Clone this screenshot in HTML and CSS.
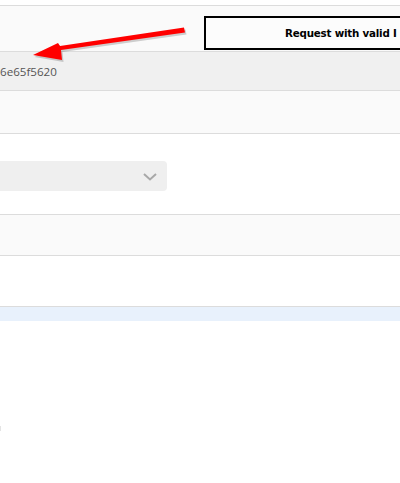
FILE: index.html
```html
<!DOCTYPE html>
<html>
<head>
<meta charset="utf-8">
<link rel="stylesheet" href="styles.css">
</head>
<body>
<div class="page">
  <div class="gap-top"></div>
  <div class="row row-light h45"></div>
  <div class="row row-gray h38"><span class="hash">6e65f5620</span></div>
  <div class="row row-light h42"></div>
  <div class="row row-white h80">
    <div class="select"><svg class="chev" width="14" height="8" viewBox="0 0 14 8"><path d="M1 1 L7 6.5 L13 1" fill="none" stroke="#a8a8a8" stroke-width="2"/></svg></div>
  </div>
  <div class="row row-light h40"></div>
  <div class="row row-white h50"></div>
  <div class="row-blue"></div>
  <div class="rest"><span class="mark"></span></div>

  <div class="callout"><span>Request with valid I</span></div>
  <svg class="arrow" width="200" height="80" viewBox="0 0 200 80">
    <g transform="translate(1.5,2)" fill="#000" opacity="0.18">
      <path d="M184 27.5 L185 32.5 L61 50 L62 60 L33 55 L58 43 L60 46 Z"/>
    </g>
    <path d="M184 27.5 L185 32.5 L61 50 L62 60 L33 55 L58 43 L60 46 Z" fill="#f00"/>
  </svg>
</div>
</body>
</html>
```
FILE: styles.css
```css
html, body {
  margin: 0;
  padding: 0;
  background: #fff;
}
.page {
  position: relative;
  width: 400px;
  height: 483px;
  overflow: hidden;
  font-family: "Open Sans", "Liberation Sans", sans-serif;
}
.gap-top {
  height: 5px;
  border-bottom: 1px solid #dcdcdc;
}
.row {
  border-bottom: 1px solid #dcdcdc;
  display: flex;
  align-items: center;
}
.row-light { background: #fafafa; }
.row-gray { background: #f0f0f0; }
.row-white { background: #fff; }
.h45 { height: 45px; }
.h38 { height: 38px; }
.h42 { height: 42px; }
.h80 { height: 80px; }
.h40 { height: 40px; }
.h50 { height: 50px; }
.hash {
  font-size: 11.6px;
  color: #555;
  line-height: 1;
  padding-top: 1px;
}
.select {
  width: 167px;
  height: 30px;
  margin-top: 4px;
  background: #efefef;
  border-radius: 0 4px 4px 0;
  display: flex;
  align-items: center;
  justify-content: flex-end;
}
.chev {
  margin-right: 10px;
  margin-top: 1px;
}
.row-blue {
  height: 14px;
  background: #e8f1fc;
}
.rest {
  height: 162px;
  position: relative;
}
.mark {
  position: absolute;
  left: 0;
  top: 105px;
  width: 1px;
  height: 5px;
  background: #e4e4e4;
}
.callout {
  position: absolute;
  left: 204px;
  top: 16px;
  width: 240px;
  height: 30px;
  border: 2px solid #000;
  background: #fcfcfc;
  display: flex;
  align-items: center;
  padding-left: 79px;
  box-sizing: content-box;
}
.callout span {
  font-family: "DejaVu Sans", "Liberation Sans", sans-serif;
  font-weight: bold;
  font-size: 10.3px;
  color: #000;
  white-space: nowrap;
  letter-spacing: -0.2px;
}
.arrow {
  position: absolute;
  left: 0;
  top: 0;
}
```
